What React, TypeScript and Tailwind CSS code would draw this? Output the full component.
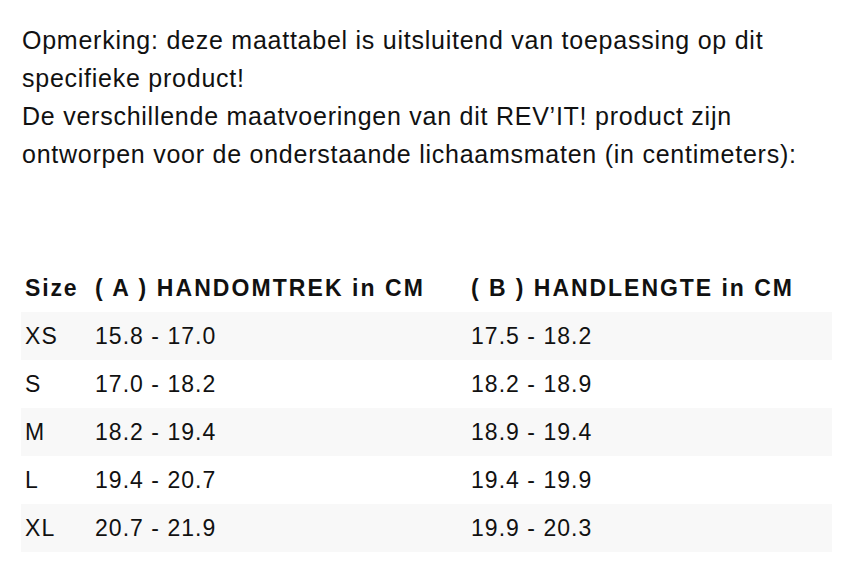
import React from "react";

const rows = [
  ["XS", "15.8 - 17.0", "17.5 - 18.2"],
  ["S", "17.0 - 18.2", "18.2 - 18.9"],
  ["M", "18.2 - 19.4", "18.9 - 19.4"],
  ["L", "19.4 - 20.7", "19.4 - 19.9"],
  ["XL", "20.7 - 21.9", "19.9 - 20.3"],
];

export default function App() {
  return (
    <div className="w-[850px] h-[575px] bg-white text-[#111111] font-['Liberation_Sans',Arial,sans-serif] overflow-hidden">
      <div className="pl-[22px] pt-[21px] text-[25px] leading-[38px] tracking-[0.03em] whitespace-nowrap">
        <p>
          Opmerking: deze maattabel is uitsluitend van toepassing op dit
          <br />
          specifieke product!
          <br />
          De verschillende maatvoeringen van dit REV’IT! product zijn
          <br />
          ontworpen voor de onderstaande lichaamsmaten (in centimeters):
        </p>
      </div>
      <div className="mt-[91px] ml-[21px] w-[811px]">
        <div className="grid grid-cols-[70px_376px_1fr] h-[48px] items-center text-[23px] font-bold tracking-[0.09em]">
          <div className="pl-1 tracking-[0.08em]">Size</div>
          <div className="pl-1">( A ) HANDOMTREK in CM</div>
          <div className="pl-1 tracking-[0.085em]">( B ) HANDLENGTE in CM</div>
        </div>
        {rows.map((r, i) => (
          <div
            key={r[0]}
            className={
              "grid grid-cols-[70px_376px_1fr] h-[48px] items-center text-[23px] tracking-[0.045em] " +
              (i % 2 === 0 ? "bg-[#f8f8f8]" : "bg-white")
            }
          >
            <div className="pl-1">{r[0]}</div>
            <div className="pl-1">{r[1]}</div>
            <div className="pl-1">{r[2]}</div>
          </div>
        ))}
      </div>
    </div>
  );
}
